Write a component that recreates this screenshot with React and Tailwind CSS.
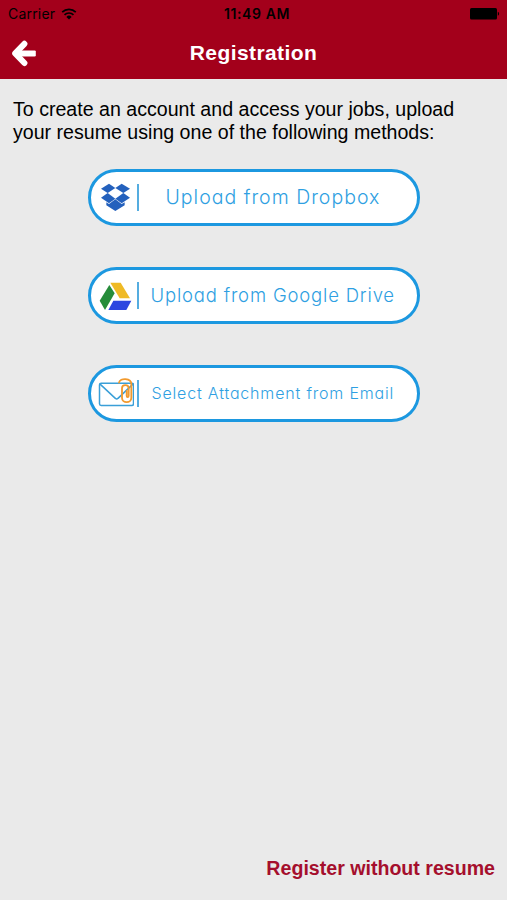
function WifiIcon() {
  return (
    <svg width="16" height="12" viewBox="0 0 16 12" fill="none" stroke="#000" strokeWidth="1.7">
      <path d="M1.2 4.2a9.6 9.6 0 0 1 13.6 0" />
      <path d="M3.5 6.9a6.3 6.3 0 0 1 9 0" />
      <path d="M8 11.4 5.4 8.9a3.6 3.6 0 0 1 5.2 0Z" fill="#000" stroke="none" />
    </svg>
  );
}

function BatteryIcon() {
  return (
    <svg width="30" height="12" viewBox="0 0 30 12">
      <rect x="0" y="0" width="27" height="11.5" rx="1.5" />
      <path d="M27.8 3.8c1.8.6 1.8 3.4 0 4Z" />
    </svg>
  );
}

function BackIcon() {
  return (
    <svg width="25" height="27" viewBox="0 0 25 27" fill="none" stroke="#fff" strokeLinejoin="round">
      <path d="M13.4 3.8 4.2 13.4l9.2 9.6" strokeWidth="6" strokeLinecap="round" />
      <rect x="5" y="10.4" width="19.8" height="6" rx="1.2" fill="#fff" stroke="none" />
    </svg>
  );
}

function DropboxIcon() {
  return (
    <svg width="31" height="29" viewBox="60 69 93 87" fill="#2461bd">
      <path d="M87 71 106 84 83 99 63 86Z" />
      <path d="M125 71 150 86 130 99 106 84Z" />
      <path d="M63 113 83 99 106 116 87 130Z" />
      <path d="M150 113 130 99 106 116 125 130Z" />
      <path d="M106 118 125 132 134 127V136L106 153 79 136V127L87 132Z" />
    </svg>
  );
}

function DriveIcon() {
  return (
    <svg width="33" height="30" viewBox="57 60 99 90">
      <path d="M59 119 88 72 104 97 75 147Z" fill="#268c3a" />
      <path d="M91 65H122L150 112H119Z" fill="#efba25" />
      <path d="M100 119H154L139 147H85Z" fill="#2c46e0" />
    </svg>
  );
}

function EmailIcon() {
  return (
    <svg width="37" height="31" viewBox="51 67 111 93" fill="none" strokeLinecap="round">
      <rect x="58.5" y="82.5" width="102" height="67" rx="5" stroke="#3a9fd8" strokeWidth="4.5" />
      <path d="m61 86 45 42q4 4 8 0l44-42" stroke="#3a9fd8" strokeWidth="4.5" />
      <path
        d="M117 81c3-15 37-15 37 5v40c0 18-28 18-28 0V98c0-13 20-13 20 0v22c0 6-6 6-6 0v-14"
        stroke="#f29a2e"
        strokeWidth="5.5"
      />
    </svg>
  );
}

const options = [
  { label: 'Upload from Dropbox', icon: DropboxIcon, text: 'ml-[27px] text-[19.5px] tracking-[1px]' },
  { label: 'Upload from Google Drive', icon: DriveIcon, text: 'ml-[12px] text-[18.5px] tracking-[0.82px]' },
  { label: 'Select Attachment from Email', icon: EmailIcon, text: 'ml-[13px] text-[16px] tracking-[0.82px]' }
];

function UploadButton({ label, icon: Icon, text }) {
  return (
    <button className="flex h-[57px] w-[332px] items-center rounded-full border-3 border-[#1c98e0] bg-white pl-[6px]">
      <span className="grid w-[37px] shrink-0 place-items-center">
        <Icon />
      </span>
      <span className="ml-[3px] h-[27px] w-[2px] shrink-0 bg-[#55ade0]"></span>
      <span
        className={`mb-[2px] whitespace-nowrap font-['Inter',sans-serif] leading-6 font-light text-[#2f9fe2] [font-feature-settings:'cv11'] ${text}`}
      >
        {label}
      </span>
    </button>
  );
}

export default function App() {
  return (
    <div className="flex h-[900px] w-[507px] flex-col overflow-hidden bg-[#eaeaea] font-['Liberation_Sans',Arial,sans-serif]">
      <header className="h-[79px] bg-[#a3001b]">
        <div className="grid h-[27px] grid-cols-3 items-center pr-[7px] pl-[8px] font-['Inter',sans-serif] text-[14px] text-black">
          <div className="flex items-center gap-[6px]">
            <span className="tracking-[0.2px]">Carrier</span>
            <WifiIcon />
          </div>
          <span className="pl-[6px] text-center font-semibold tracking-[0.6px] whitespace-nowrap">11:49 AM</span>
          <span className="justify-self-end">
            <BatteryIcon />
          </span>
        </div>
        <div className="grid h-[52px] grid-cols-[40px_1fr_40px] items-center pr-[11px] pl-[11px]">
          <button aria-label="Back">
            <BackIcon />
          </button>
          <h1 className="text-center text-[21px] font-bold tracking-[0.42px] text-white">Registration</h1>
        </div>
      </header>

      <main className="flex flex-1 flex-col">
        <p className="mt-[19px] ml-[13px] text-[19.6px] leading-[23px] whitespace-nowrap text-black">
          To create an account and access your jobs, upload
          <br />
          your resume using one of the following methods:
        </p>
        <div className="mt-[25px] flex flex-col items-center gap-[41px]">
          {options.map((option) => (
            <UploadButton key={option.label} {...option} />
          ))}
        </div>
      </main>

      <footer className="flex justify-end pr-[12px] pb-[19px]">
        <a className="text-[19.6px] leading-[26px] font-bold whitespace-nowrap text-[#a50f2d]">Register without resume</a>
      </footer>
    </div>
  );
}
